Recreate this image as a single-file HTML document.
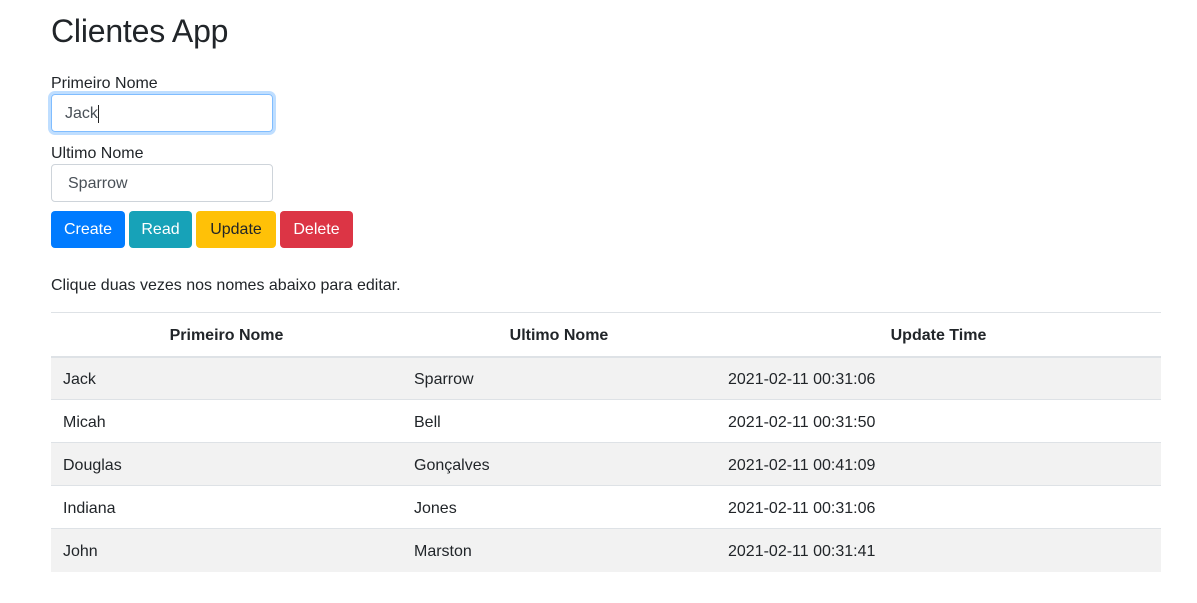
<!DOCTYPE html>
<html><head><meta charset="utf-8"><style>
*{box-sizing:border-box}
body{margin:0;font-family:"Liberation Sans",Arial,sans-serif;color:#212529;font-size:16px;background:#fff;width:1197px;height:603px;overflow:hidden;position:relative}
.a{position:absolute}
h1{position:absolute;left:51px;top:12px;margin:0;font-size:32px;font-weight:500;line-height:38px;letter-spacing:-0.2px}
.lbl{position:absolute;left:51px;font-size:16px;line-height:20px}
.inp{position:absolute;left:51px;width:222px;height:38px;border:1px solid #ced4da;border-radius:4px;padding:1px 16px 0;line-height:36px;color:#495057}
.inp.f{border-color:#80bdff;box-shadow:0 0 0 3px rgba(0,123,255,.25);padding-left:13px}
.btn{position:absolute;top:211px;height:37px;border-radius:4px;line-height:37px;text-align:center;color:#fff;font-size:16px}
table{position:absolute;left:51px;top:312px;width:1110px;border-collapse:collapse;font-size:16px}
th{height:44px;border-top:1px solid #dee2e6;border-bottom:2px solid #dee2e6;font-weight:bold;text-align:center;padding:3px 0 0}
td{height:43px;border-top:1px solid #dee2e6;padding:3px 12px 0}
tbody tr:nth-child(odd){background:#f2f2f2}
</style></head><body>
<h1>Clientes App</h1>
<div class="lbl" style="top:74px">Primeiro Nome</div>
<div class="inp f" style="top:94px">Jack<span style="display:inline-block;width:1px;height:18px;background:#222;vertical-align:middle"></span></div>
<div class="lbl" style="top:144px">Ultimo Nome</div>
<div class="inp" style="top:164px">Sparrow</div>
<div class="btn" style="left:51px;width:74px;background:#007bff">Create</div>
<div class="btn" style="left:129px;width:63px;background:#17a2b8">Read</div>
<div class="btn" style="left:196px;width:80px;background:#ffc107;color:#212529">Update</div>
<div class="btn" style="left:280px;width:73px;background:#dc3545">Delete</div>
<div class="a" style="left:51px;top:277px">Clique duas vezes nos nomes abaixo para editar.</div>
<table>
<colgroup><col style="width:351px"><col style="width:314px"><col></colgroup>
<thead><tr><th>Primeiro Nome</th><th>Ultimo Nome</th><th>Update Time</th></tr></thead>
<tbody>
<tr><td>Jack</td><td>Sparrow</td><td>2021-02-11 00:31:06</td></tr>
<tr><td>Micah</td><td>Bell</td><td>2021-02-11 00:31:50</td></tr>
<tr><td>Douglas</td><td>Gonçalves</td><td>2021-02-11 00:41:09</td></tr>
<tr><td>Indiana</td><td>Jones</td><td>2021-02-11 00:31:06</td></tr>
<tr><td>John</td><td>Marston</td><td>2021-02-11 00:31:41</td></tr>
</tbody></table>
</body></html>
